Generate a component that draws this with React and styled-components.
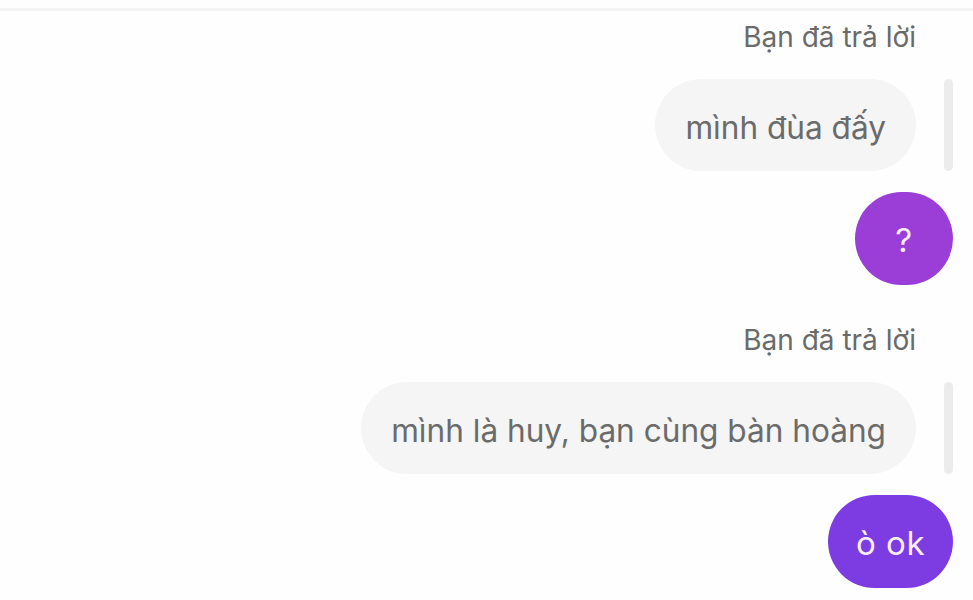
import React from "react";
import styled, { createGlobalStyle } from "styled-components";

const Global = createGlobalStyle`
  html, body { margin: 0; padding: 0; background: #fefefe; }
  body { font-family: Inter, Roboto, "Noto Sans", "Liberation Sans", sans-serif; }
`;

const Page = styled.div`
  width: 973px;
  height: 600px;
  overflow: hidden;
  background: #fefefe;
  display: flex;
  flex-direction: column;
`;

const TopRule = styled.div`
  height: 3px;
  margin-top: 8px;
  background: #f3f3f3;
`;

const Thread = styled.div`
  display: flex;
  flex-direction: column;
  align-items: flex-end;
  padding-right: 20px;
  padding-top: 9px;
`;

const Group = styled.div`
  display: flex;
  flex-direction: column;
  align-items: flex-end;
  margin-top: ${(p) => p.$top || 0}px;
`;

const ReplyLabel = styled.div`
  font-size: 28px;
  line-height: 34px;
  color: #6a6a6a;
  margin-right: 37px;
`;

const QuoteRow = styled.div`
  display: flex;
  align-items: stretch;
  gap: 28px;
  margin-top: 25px;
`;

const QuoteBubble = styled.div`
  background: #f5f5f5;
  color: #6b6b6b;
  font-size: 31.6px;
  line-height: 86px;
  height: 92px;
  box-sizing: border-box;
  padding: 6px 30px 0;
  border-radius: 46px;
  white-space: nowrap;
`;

const QuoteBar = styled.div`
  width: 9px;
  border-radius: 5px;
  background: #ececec;
`;

const SentBubble = styled.div`
  margin-top: 21px;
  background: ${(p) => p.$color};
  color: #fbeeff;
  font-size: 33px;
  letter-spacing: 0.5px;
  height: 93px;
  min-width: 98px;
  box-sizing: border-box;
  padding: 2px 28px 0;
  border-radius: 47px;
  display: flex;
  align-items: center;
  justify-content: center;
  white-space: nowrap;
`;

export default function App() {
  return (
    <Page>
      <Global />
      <TopRule />
      <Thread>
        <Group>
          <ReplyLabel>Bạn đã trả lời</ReplyLabel>
          <QuoteRow>
            <QuoteBubble>mình đùa đấy</QuoteBubble>
            <QuoteBar />
          </QuoteRow>
          <SentBubble $color="#9a3ed7">?</SentBubble>
        </Group>
        <Group $top={38}>
          <ReplyLabel>Bạn đã trả lời</ReplyLabel>
          <QuoteRow>
            <QuoteBubble>mình là huy, bạn cùng bàn hoàng</QuoteBubble>
            <QuoteBar />
          </QuoteRow>
          <SentBubble $color="#7d3be2">ò ok</SentBubble>
        </Group>
      </Thread>
    </Page>
  );
}
